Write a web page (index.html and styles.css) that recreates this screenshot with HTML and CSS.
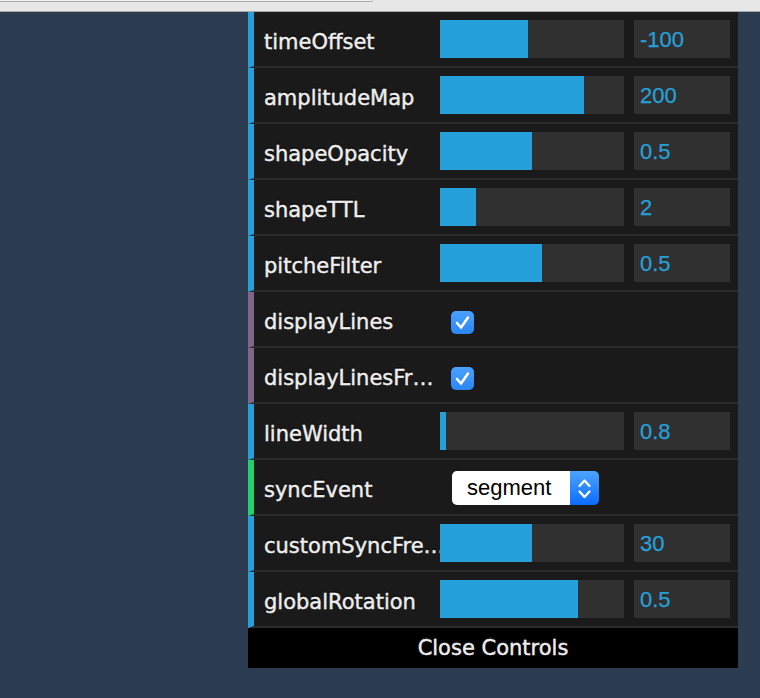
FILE: index.html
```html
<!DOCTYPE html>
<html>
<head>
<meta charset="utf-8">
<link rel="stylesheet" href="styles.css">
</head>
<body>
<div class="topbar"><div class="urlfield"></div></div>
<div class="page">
  <div class="gui">
    <ul class="rows">
      <li class="cr number">
        <span class="name">timeOffset</span>
        <div class="slider"><div class="fg" style="width:47.8%"></div></div>
        <div class="value">-100</div>
      </li>
      <li class="cr number">
        <span class="name">amplitudeMap</span>
        <div class="slider"><div class="fg" style="width:78.3%"></div></div>
        <div class="value">200</div>
      </li>
      <li class="cr number">
        <span class="name">shapeOpacity</span>
        <div class="slider"><div class="fg" style="width:50%"></div></div>
        <div class="value">0.5</div>
      </li>
      <li class="cr number">
        <span class="name">shapeTTL</span>
        <div class="slider"><div class="fg" style="width:19.6%"></div></div>
        <div class="value">2</div>
      </li>
      <li class="cr number">
        <span class="name">pitcheFilter</span>
        <div class="slider"><div class="fg" style="width:55.4%"></div></div>
        <div class="value">0.5</div>
      </li>
      <li class="cr boolean">
        <span class="name">displayLines</span>
        <span class="check"><svg width="23" height="23" viewBox="0 0 23 23"><defs><linearGradient id="cg1" x1="0" y1="0" x2="0" y2="1"><stop offset="0" stop-color="#4aa1fb"/><stop offset="1" stop-color="#2c86f5"/></linearGradient></defs><rect x="0" y="0" width="23" height="23" rx="5" fill="url(#cg1)"/><polyline points="6,12 10,16.5 17,6.5" fill="none" stroke="#fff" stroke-width="2.6" stroke-linecap="round" stroke-linejoin="round"/></svg></span>
      </li>
      <li class="cr boolean">
        <span class="name">displayLinesFr…</span>
        <span class="check"><svg width="23" height="23" viewBox="0 0 23 23"><defs><linearGradient id="cg2" x1="0" y1="0" x2="0" y2="1"><stop offset="0" stop-color="#4aa1fb"/><stop offset="1" stop-color="#2c86f5"/></linearGradient></defs><rect x="0" y="0" width="23" height="23" rx="5" fill="url(#cg2)"/><polyline points="6,12 10,16.5 17,6.5" fill="none" stroke="#fff" stroke-width="2.6" stroke-linecap="round" stroke-linejoin="round"/></svg></span>
      </li>
      <li class="cr number">
        <span class="name">lineWidth</span>
        <div class="slider"><div class="fg" style="width:3.3%"></div></div>
        <div class="value">0.8</div>
      </li>
      <li class="cr string">
        <span class="name">syncEvent</span>
        <div class="select">
          <span class="select-text">segment</span>
          <span class="select-btn"><svg width="29" height="34" viewBox="0 0 29 34"><polyline points="9.5,15 14.5,9.5 19.5,15" fill="none" stroke="#fff" stroke-width="2.2" stroke-linecap="round" stroke-linejoin="round"/><polyline points="9.5,20.5 14.5,26 19.5,20.5" fill="none" stroke="#fff" stroke-width="2.2" stroke-linecap="round" stroke-linejoin="round"/></svg></span>
        </div>
      </li>
      <li class="cr number">
        <span class="name">customSyncFre…</span>
        <div class="slider"><div class="fg" style="width:50%"></div></div>
        <div class="value">30</div>
      </li>
      <li class="cr number">
        <span class="name">globalRotation</span>
        <div class="slider"><div class="fg" style="width:75%"></div></div>
        <div class="value">0.5</div>
      </li>
    </ul>
    <div class="close">Close Controls</div>
  </div>
</div>
</body>
</html>
```

FILE: styles.css
```css
html, body {
  margin: 0;
  padding: 0;
}
body {
  background: #2b3c50;
  width: 760px;
  height: 698px;
  overflow: hidden;
}
.topbar {
  height: 11px;
  background: #e7e7e7;
  border-bottom: 1px solid #a6a6a6;
}
.urlfield {
  width: 372px;
  height: 1px;
  border-bottom: 1px solid #a8a8a8;
  border-right: 1px solid #b8b8b8;
  border-bottom-right-radius: 3px;
  background: #f2f2f2;
}
.page {
  display: flex;
  padding-left: 248px;
}
.gui {
  width: 490px;
  font-family: "DejaVu Sans", sans-serif;
  font-size: 21px;
  color: #eeeeee;
}
.rows {
  list-style: none;
  margin: 0;
  padding: 0;
}
.cr {
  display: flex;
  align-items: center;
  height: 54px;
  padding: 0 8px 0 10px;
  background: #1a1a1a;
  border-bottom: 2px solid #2c2c2c;
  border-left: 6px solid #26a0da;
}
.cr.boolean {
  border-left-color: #806787;
}
.cr.string {
  border-left-color: #1ed36f;
}
.name {
  flex: none;
  width: 186px;
  line-height: 54px;
  padding-top: 3px;
  height: 51px;
  white-space: nowrap;
  overflow: hidden;
  -webkit-text-stroke: 0.4px #eeeeee;
  text-shadow: 0 -2px 0 #111;
}
.slider {
  flex: none;
  position: relative;
  width: 184px;
  height: 38px;
  margin-left: -10px;
  background: #303030;
}
.fg {
  height: 100%;
  background: #26a0da;
}
.value {
  flex: none;
  height: 38px;
  margin-left: 10px;
  padding: 1px 0 0 6px;
  box-sizing: border-box;
  width: 96px;
  line-height: 38px;
  background: #303030;
  color: #26a0da;
  font-family: "Liberation Sans", Arial, sans-serif;
  font-size: 22px;
  -webkit-text-stroke: 0.25px #26a0da;
}
.check {
  flex: none;
  display: block;
  width: 23px;
  height: 23px;
  margin: 6px 0 0 1px;
}
.check svg {
  display: block;
}
.select {
  flex: none;
  display: flex;
  margin: 2px 0 0 2px;
  height: 34px;
  font-family: "Liberation Sans", Arial, sans-serif;
  font-size: 22px;
  color: #000;
}
.select-text {
  width: 118px;
  box-sizing: border-box;
  padding-left: 15px;
  line-height: 34px;
  background: #fff;
  border-radius: 5px 0 0 5px;
}
.select-btn {
  width: 29px;
  height: 34px;
  border-radius: 0 5px 5px 0;
  background: linear-gradient(#4ea3ff, #0b6cff);
}
.select-btn svg {
  display: block;
}
.close {
  height: 40px;
  line-height: 40px;
  background: #000;
  text-align: center;
  color: #eeeeee;
  -webkit-text-stroke: 0.4px #eeeeee;
  text-shadow: 0 -2px 0 #111;
}
```
